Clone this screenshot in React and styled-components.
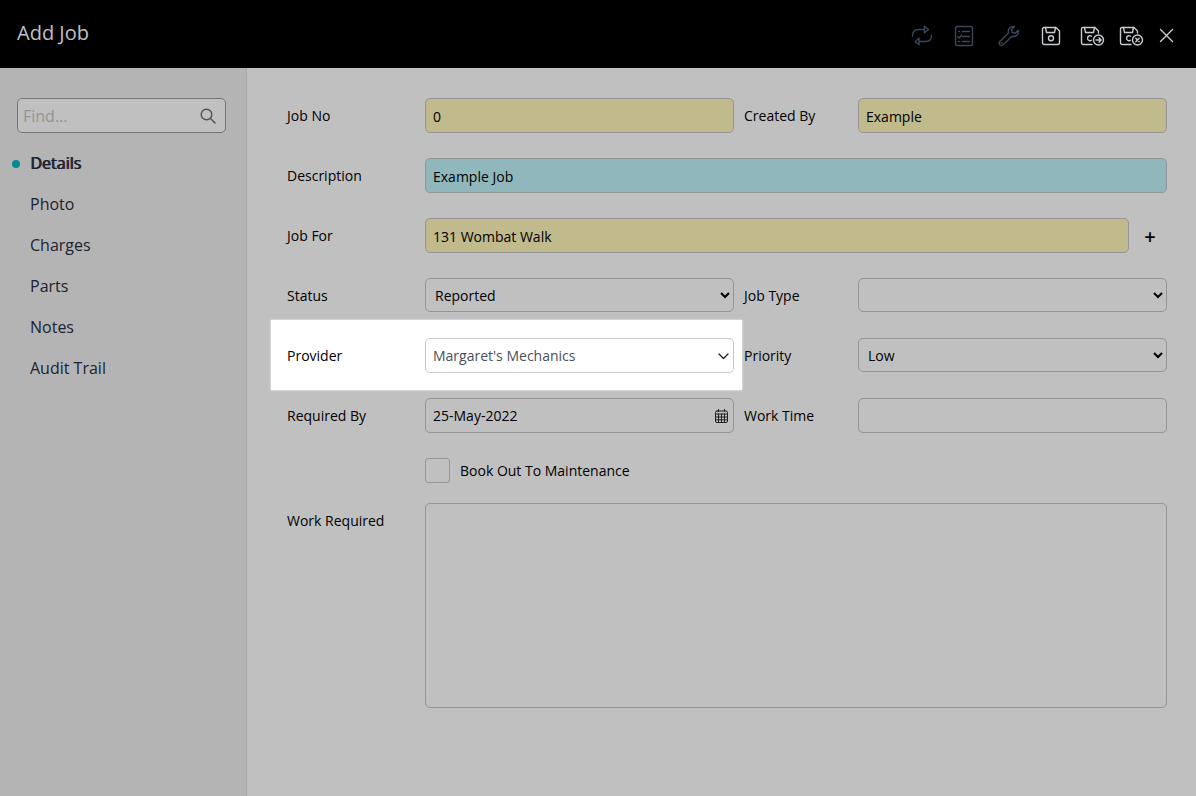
import React, { useState } from 'react';
import styled, { createGlobalStyle, css } from 'styled-components';

const menuItems = ['Details', 'Photo', 'Charges', 'Parts', 'Notes', 'Audit Trail'];

const RepeatIcon = () => (
  <Icon width="22" height="22" viewBox="0 0 22 22">
    <path d="M1.5 11C1.5 7 3.5 4.5 7 4.5H13.5M13.5 1.2V7.8L17.5 4.5Z" />
    <path d="M20.5 10.5C20.5 14.500 18 16.500 14.5 16.5H8M8 13.2V19.8L4 16.5Z" />
  </Icon>
);

const ChecklistIcon = () => (
  <Icon width="20" height="22" viewBox="0 0 20 22">
    <rect x="1.5" y="1.5" width="17" height="19" rx="1.5" />
    <path d="M8.5 6.5H15.5M8.5 11.5H15.5M8.5 16.5H15.5M4.5 6.5H5.5M4.5 16.5H5.5M3.5 11.5L5 13L7.5 10" />
  </Icon>
);

const WrenchIcon = () => (
  <Icon width="24" height="24" viewBox="0 0 24 24">
    <path d="M17.5 2.5C13.5 2 10.5 5 11.500 9L2.8 17.5Q1.5 19 2.8 20.7Q4.5 22.200 6 21L14.800 12.300C18.800 13.300 22 10.300 21.3 6.300L18.300 9.200L15.300 8.500L14.500 5.500Z" />
    <circle cx="4.700" cy="19" r="0.400" />
  </Icon>
);

const SaveIcon = () => (
  <Icon width="20" height="20" viewBox="0 0 20 20">
    <path d="M3 1.5H15L18.5 5V16.5Q18.5 18.5 16.5 18.5H3.5Q1.5 18.5 1.5 16.5V3Q1.5 1.5 3 1.5Z" />
    <path d="M4.5 1.5L5.5 6.5H13.5L14.5 1.5" />
    <circle cx="10" cy="12.2" r="2.5" />
  </Icon>
);

const SaveBadgeIcon = ({ children }) => (
  <Icon width="26" height="22" viewBox="0 0 26 22">
    <path d="M12 19.5H3.5Q1.5 19.5 1.5 17.5V4Q1.5 2.5 3 2.5H15L18.5 6V8" />
    <path d="M4.500 2.5L5.5 7.5H13.5L14.5 2.5" />
    <path d="M11.5 11.2Q10.5 10.5 9.5 10.7Q7.5 11.200 7.5 13.2Q7.5 15.200 9.5 15.7Q10.5 15.9 11.5 15.2" />
    <circle cx="18.5" cy="15" r="5" />
    {children}
  </Icon>
);

const CalendarIcon = () => (
  <Icon width="13" height="14" viewBox="0 0 13 14">
    <rect x="0.5" y="2" width="12" height="11.5" rx="1.5" />
    <path d="M0.5 5H12.5M0.5 8H12.5M0.5 10.8H12.5M3.5 5V13.5M6.5 5V13.5M9.5 5V13.5M3.5 0V2.5M9.5 0V2.5" />
  </Icon>
);

const App = () => {
  const [active, setActive] = useState('Details');

  return (
    <>
      <GlobalStyle />
      <Page>
        <Header>
          <Title>Add Job</Title>
          <Toolbar>
            <ToolButton $width={22} $gap={21} disabled aria-label="Repeat"><RepeatIcon /></ToolButton>
            <ToolButton $width={20} $gap={23} disabled aria-label="Checklist"><ChecklistIcon /></ToolButton>
            <ToolButton $width={24} $gap={20} disabled aria-label="Maintenance"><WrenchIcon /></ToolButton>
            <ToolButton $width={20} $gap={19} aria-label="Save"><SaveIcon /></ToolButton>
            <ToolButton $width={26} $gap={13} aria-label="Save and continue">
              <SaveBadgeIcon><path d="M16 15H21M19 12.800L21.2 15L19 17.2" /></SaveBadgeIcon>
            </ToolButton>
            <ToolButton $width={26} $gap={14} aria-label="Save and close">
              <SaveBadgeIcon><path d="M16.8 13.3L20.2 16.7M20.2 13.3L16.8 16.7" /></SaveBadgeIcon>
            </ToolButton>
            <ToolButton $width={15} aria-label="Close">
              <Icon width="15" height="15" viewBox="0 0 15 15"><path d="M1.5 1.5L13.5 13.5M13.5 1.5L1.5 13.5" /></Icon>
            </ToolButton>
          </Toolbar>
        </Header>
        <Body>
          <Sidebar>
            <Search>
              <SearchInput placeholder="Find..." aria-label="Find" />
              <Icon width="16" height="16" viewBox="0 0 16 16">
                <circle cx="6.5" cy="6.5" r="5.3" />
                <path d="M10.5 10.5L15 15" />
              </Icon>
            </Search>
            <Menu>
              {menuItems.map(item => (
                <MenuLink key={item} href="#" $active={item === active} onClick={() => setActive(item)}>
                  {item}
                </MenuLink>
              ))}
            </Menu>
          </Sidebar>
          <Form>
            <Field>
              <Label htmlFor="jobNo">Job No</Label>
              <Input id="jobNo" $fill="#c0ba8c" defaultValue="0" />
            </Field>
            <Field>
              <Label htmlFor="createdBy" $second>Created By</Label>
              <Input id="createdBy" $fill="#c0ba8c" defaultValue="Example" />
            </Field>
            <WideField>
              <Label htmlFor="description">Description</Label>
              <Input id="description" $fill="#90b8bc" defaultValue="Example Job" />
            </WideField>
            <WideField>
              <Label htmlFor="jobFor">Job For</Label>
              <WithButton>
                <Input id="jobFor" $fill="#c0ba8c" defaultValue="131 Wombat Walk" />
                <AddButton type="button" aria-label="Add">+</AddButton>
              </WithButton>
            </WideField>
            <Field>
              <Label htmlFor="status">Status</Label>
              <Select id="status"><option>Reported</option></Select>
            </Field>
            <Field>
              <Label htmlFor="jobType" $second>Job Type</Label>
              <Select id="jobType"><option></option></Select>
            </Field>
            <Field $highlight>
              <Label htmlFor="provider">Provider</Label>
              <Control>
                <ProviderSelect id="provider"><option>Margaret's Mechanics</option></ProviderSelect>
                <Icon width="11" height="7" viewBox="0 0 11 7"><path d="M1 1L5.5 5.5L10 1" /></Icon>
              </Control>
            </Field>
            <Field>
              <Label htmlFor="priority" $second>Priority</Label>
              <Select id="priority"><option>Low</option></Select>
            </Field>
            <Field>
              <Label htmlFor="requiredBy">Required By</Label>
              <Control>
                <Input id="requiredBy" defaultValue="25-May-2022" />
                <CalendarIcon />
              </Control>
            </Field>
            <Field>
              <Label htmlFor="workTime" $second>Work Time</Label>
              <Input id="workTime" />
            </Field>
            <CheckRow>
              <Checkbox type="checkbox" id="bookOut" />
              <label htmlFor="bookOut">Book Out To Maintenance</label>
            </CheckRow>
            <WideField>
              <Label htmlFor="workRequired">Work Required</Label>
              <TextArea id="workRequired" />
            </WideField>
          </Form>
        </Body>
      </Page>
    </>
  );
};

export default App;



const GlobalStyle = createGlobalStyle`
  * {
    box-sizing: border-box;
  }

  body {
    margin: 0;
    background-color: #c0c0c0;
    color: #000;
    font-family: "Open Sans", "Noto Sans", sans-serif;
    font-size: 14px;
  }

  input, select, textarea, button {
    font: inherit;
    color: inherit;
  }
`;

const Page = styled.div`
  display: flex;
  flex-direction: column;
  min-height: 100vh;
`;

const Header = styled.header`
  display: flex;
  justify-content: space-between;
  height: 68px;
  padding: 0 22px 0 17px;
  background-color: #000;
  color: #c0c0c0;
`;

const Title = styled.h1`
  margin: 0;
  font-size: 20px;
  font-weight: 400;
  line-height: 66px;
`;

const Toolbar = styled.div`
  display: flex;
  align-items: center;
  padding-top: 3px;
`;

const Icon = styled.svg`
  display: block;
  flex: none;
  fill: none;
  stroke: currentColor;
  stroke-width: 1.4;
  stroke-linecap: round;
  stroke-linejoin: round;
`;

const ToolButton = styled.button`
  display: flex;
  justify-content: center;
  width: ${({ $width }) => $width}px;
  margin: 0 ${({ $gap }) => $gap || 0}px 0 0;
  padding: 0;
  border: 0;
  background: none;
  color: #c8ccd0;
  cursor: pointer;

  &:disabled {
    color: #3a465c;
    cursor: default;
  }
`;

const Body = styled.div`
  display: flex;
  flex: 1;
`;

const Sidebar = styled.aside`
  flex: none;
  width: 247px;
  padding: 30px 20px 30px 17px;
  background-color: #b4b4b4;
  border-right: 1px solid #a8a8a8;
`;

const Search = styled.div`
  display: flex;
  align-items: center;
  height: 35px;
  padding: 0 9px 0 5px;
  border: 1px solid #757575;
  border-radius: 5px;
  background-color: #c0c0c0;
  color: #505050;
`;

const SearchInput = styled.input`
  flex: 1;
  min-width: 0;
  padding: 0;
  border: 0;
  outline: 0;
  background: none;
  font-size: 16px;

  &::placeholder {
    color: #949494;
  }
`;

const Menu = styled.nav`
  display: flex;
  flex-direction: column;
  padding: 10px 0 0 13px;
`;

const MenuLink = styled.a`
  display: flex;
  align-items: center;
  color: #1c2230;
  font-size: 16px;
  line-height: 41px;
  text-decoration: none;

  ${({ $active }) => $active && css`
    margin-left: -18px;
    text-shadow: 1px 0 0 #1c2230;

    &::before {
      content: '';
      width: 8px;
      height: 8px;
      margin-right: 10px;
      border-radius: 50%;
      background-color: #008c96;
    }
  `}
`;

const Form = styled.form`
  display: grid;
  flex: 1;
  grid-template-columns: 138px 1fr 124px 1fr;
  align-content: start;
  row-gap: 25px;
  padding: 30px 29px 30px 40px;
`;

const Label = styled.label`
  position: relative;
  padding-left: ${({ $second }) => ($second ? '10px' : '0')};
  line-height: 35px;
`;

const Field = styled.div`
  position: relative;
  display: grid;
  grid-column: span 2;
  grid-template-columns: subgrid;
  height: 35px;

  ${({ $highlight }) => $highlight && css`
    &::before {
      content: '';
      position: absolute;
      inset: -18px -8px -17px -16px;
      background-color: #fff;
      box-shadow: 0 0 2px #fff;
    }
  `}
`;

const WideField = styled.div`
  display: grid;
  grid-column: 1 / -1;
  grid-template-columns: 138px 1fr;
`;

const fieldBox = css`
  width: 100%;
  min-width: 0;
  height: 35px;
  border: 1px solid #959595;
  border-radius: 5px;
  background-color: #c0c0c0;
`;

const Input = styled.input`
  ${fieldBox}
  padding: 0 7px;

  ${({ $fill }) => $fill && css`
    padding-top: 2px;
    background-color: ${$fill};
  `}
`;

const Select = styled.select`
  ${fieldBox}
  height: 34px;
  padding: 0 0 0 5px;
`;

const Control = styled.div`
  position: relative;

  ${Icon} {
    position: absolute;
    top: 11px;
    right: 6px;
    stroke-width: 1;
    color: #222;
    pointer-events: none;
  }
`;

const ProviderSelect = styled.select`
  ${fieldBox}
  padding: 0 24px 0 7px;
  appearance: none;
  border-color: #c8c8c8;
  background-color: #fff;
  color: #495057;

  & + ${Icon} {
    top: 15px;
    right: 5px;
    stroke-width: 1.3;
  }
`;

const WithButton = styled.div`
  display: flex;
`;

const AddButton = styled.button`
  flex: 0 0 38px;
  padding: 3px 0 0 4px;
  border: 0;
  background: none;
  font-size: 20px;
  font-weight: 600;
  line-height: 32px;
  cursor: pointer;
`;

const CheckRow = styled.div`
  display: flex;
  grid-column: 2 / -1;
  align-items: center;
  gap: 10px;
  margin-bottom: -5px;
`;

const Checkbox = styled.input`
  width: 25px;
  height: 25px;
  margin: 0;
  appearance: none;
  border: 1px solid #959595;
  border-radius: 3px;

  &:checked {
    background-color: #008c96;
  }
`;

const TextArea = styled.textarea`
  ${fieldBox}
  display: block;
  height: 205px;
  padding: 7px;
  resize: none;
`;
